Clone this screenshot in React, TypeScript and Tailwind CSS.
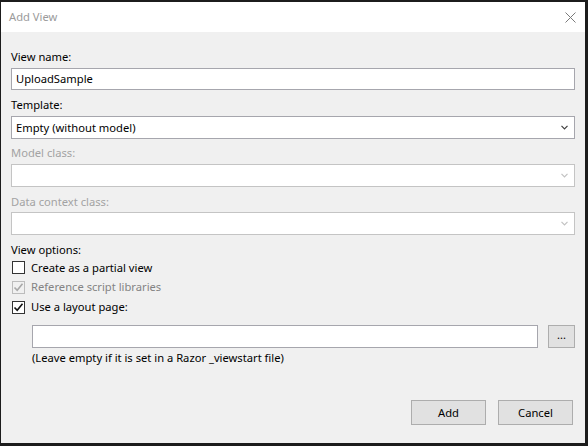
import React from 'react';

const font = "font-['Noto_Sans','Open_Sans',sans-serif]";

const Chevron = ({ disabled }: { disabled?: boolean }) => (
  <svg width="7" height="5" viewBox="0 0 7 5" className="shrink-0">
    <path d="M0.5 0.8 L3.5 3.8 L6.5 0.8" fill="none" stroke={disabled ? '#c2c2c2' : '#404040'} strokeWidth="1.2" />
  </svg>
);

const Select = ({ value, disabled }: { value?: string; disabled?: boolean }) => (
  <div
    className={`flex h-[23px] items-center justify-between border bg-white pl-[4px] pr-[6px] ${
      disabled ? 'border-[#c4c4c4]' : 'border-[#a6a6ad]'
    }`}
  >
    <span className="text-[11.2px] text-[#000]">{value}</span>
    <Chevron disabled={disabled} />
  </div>
);

const Checkbox = ({ checked, disabled }: { checked?: boolean; disabled?: boolean }) => (
  <span
    className={`flex h-[13px] w-[13px] shrink-0 items-center justify-center border ${
      disabled ? 'border-[#bcbcbc] bg-[#f0f0f0]' : 'border-[#333333] bg-white'
    }`}
  >
    {checked && (
      <svg width="11" height="11" viewBox="0 0 11 11">
        <path d="M1.5 5.5 L4.2 8.3 L9.5 1.8" fill="none" stroke={disabled ? '#a8a8a8' : '#111'} strokeWidth="1.6" />
      </svg>
    )}
  </span>
);

const Option = ({
  label,
  checked,
  disabled,
  h,
}: {
  label: string;
  checked?: boolean;
  disabled?: boolean;
  h: string;
}) => (
  <div className={`flex items-center gap-[6px] pl-[1px] ${h}`}>
    <Checkbox checked={checked} disabled={disabled} />
    <span className={`text-[11.2px] ${disabled ? 'text-[#838383]' : 'text-[#000]'}`}>{label}</span>
  </div>
);

const Button = ({ children }: { children: React.ReactNode }) => (
  <button className="flex h-[25px] w-[75px] items-center justify-center border border-[#adadad] bg-[#e1e1e1] text-[11.2px] text-[#000]">
    {children}
  </button>
);

const AddViewDialog = () => {
  return (
    <div className={`h-[446px] w-[588px] bg-[#1c1c1c] pb-[3px] pl-[1px] pr-[3px] pt-[2px] ${font}`}>
      <div className="flex h-full flex-col bg-[#f0f0f0]">
        {/* title bar */}
        <div className="flex h-[30px] shrink-0 items-center justify-between bg-white pl-[8px] pr-[9px]">
          <span className="text-[11.2px] text-[#9b9b9b]">Add View</span>
          <svg width="11" height="11" viewBox="0 0 11 11">
            <path d="M0.5 0.5 L10.5 10.5 M10.5 0.5 L0.5 10.5" stroke="#7a7a7a" strokeWidth="1" />
          </svg>
        </div>

        <div className="flex flex-1 flex-col px-[10px] pt-[17px] leading-[16px]">
          <label className="text-[11.2px] text-[#000]">View name:</label>
          <div className="mt-[3px] flex h-[22px] items-center border border-[#a6a6ad] bg-white pl-[4px] text-[11.2px] text-[#000]">
            UploadSample
          </div>

          <label className="mt-[7px] text-[11.2px] text-[#000]">Template:</label>
          <div className="mt-[3px]">
            <Select value="Empty (without model)" />
          </div>

          <label className="mt-[6px] text-[11.2px] text-[#a3a3a3]">Model class:</label>
          <div className="mt-[3px]">
            <Select disabled />
          </div>

          <label className="mt-[7px] text-[11.2px] text-[#a3a3a3]">Data context class:</label>
          <div className="mt-[2px]">
            <Select disabled />
          </div>

          <label className="mt-[7px] text-[11.2px] text-[#000]">View options:</label>
          <Option h="h-[19px]" label="Create as a partial view" />
          <Option h="h-[20px]" label="Reference script libraries" checked disabled />
          <Option h="h-[20px]" label="Use a layout page:" checked />

          <div className="ml-[21px] mt-[8px] flex items-center gap-[10px]">
            <div className="h-[23px] flex-1 border border-[#a6a6ad] bg-white" />
            <button className="flex h-[23px] w-[27px] items-center justify-center border border-[#adadad] bg-[#e1e1e1] pb-[4px] text-[11px] text-[#000]">
              ...
            </button>
          </div>
          <p className="ml-[21px] mt-[2px] text-[11.2px] text-[#000]">
            (Leave empty if it is set in a Razor _viewstart file)
          </p>

          <div className="mt-[34px] flex justify-end gap-[12px] pr-[2px]">
            <Button>Add</Button>
            <Button>Cancel</Button>
          </div>
        </div>
      </div>
    </div>
  );
};

export default function App() {
  return <AddViewDialog />;
}
